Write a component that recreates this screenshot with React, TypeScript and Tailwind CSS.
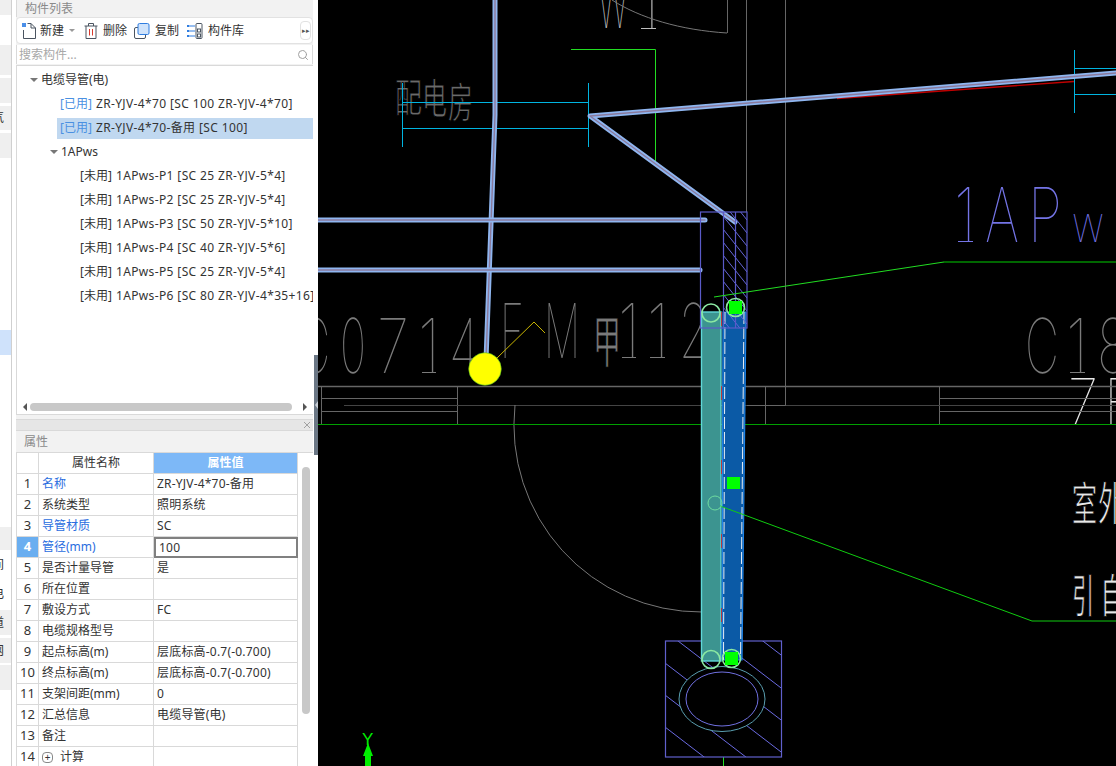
import { Search } from "lucide-react";

const font = { fontFamily: '"Noto Sans", "Noto Sans CJK SC", sans-serif' };

const tree = [
  { label: "ZR-YJV-4*70 [SC 100 ZR-YJV-4*70]", used: true },
  { label: "ZR-YJV-4*70-备用 [SC 100]", used: true, selected: true },
];

const pws = [
  "1APws-P1 [SC 25 ZR-YJV-5*4]",
  "1APws-P2 [SC 25 ZR-YJV-5*4]",
  "1APws-P3 [SC 50 ZR-YJV-5*10]",
  "1APws-P4 [SC 40 ZR-YJV-5*6]",
  "1APws-P5 [SC 25 ZR-YJV-5*4]",
  "1APws-P6 [SC 80 ZR-YJV-4*35+16]",
];

const rows = [
  { name: "名称", value: "ZR-YJV-4*70-备用", blue: true },
  { name: "系统类型", value: "照明系统" },
  { name: "导管材质", value: "SC", blue: true },
  { name: "管径(mm)", value: "100", blue: true, active: true },
  { name: "是否计量导管", value: "是" },
  { name: "所在位置", value: "" },
  { name: "敷设方式", value: "FC" },
  { name: "电缆规格型号", value: "" },
  { name: "起点标高(m)", value: "层底标高-0.7(-0.700)" },
  { name: "终点标高(m)", value: "层底标高-0.7(-0.700)" },
  { name: "支架间距(mm)", value: "0" },
  { name: "汇总信息", value: "电缆导管(电)" },
  { name: "备注", value: "" },
  { name: "计算", value: "", expand: true },
];

const strip = [
  { cls: "h-[15px] bg-[#efefef]" },
  { cls: "h-[30px] bg-white" },
  { cls: "h-[30px] bg-[#efefef]" },
  { cls: "h-[3px] bg-white" },
  { cls: "h-[25px] bg-[#efefef]" },
  { cls: "h-[3px] bg-white" },
  { cls: "h-[24px] bg-[#efefef]", text: "气" },
  { cls: "h-[3px] bg-white" },
  { cls: "h-[25px] bg-[#efefef]" },
  { cls: "h-[172px] bg-white" },
  { cls: "h-[25px] bg-[#cfe2fb]" },
  { cls: "h-[172px] bg-white" },
  { cls: "h-[23px] bg-[#efefef]" },
  { cls: "h-[30px] bg-white", text: "间" },
  { cls: "h-[27px] bg-white", text: "电" },
  { cls: "h-[3px] bg-white" },
  { cls: "h-[25px] bg-[#efefef]", text: "道" },
  { cls: "h-[3px] bg-white" },
  { cls: "h-[25px] bg-[#efefef]", text: "网" },
  { cls: "h-[2px] bg-white" },
  { cls: "h-[25px] bg-[#efefef]" },
];

// CAD annotation glyphs: x, baseline, width, height
const gray = "#7a7a7a";
const white = "#e8e8e8";
const purple = "#7474e6";
const cadText = [
  { t: "W", x: 598, y: 28, w: 30, h: 50, c: "#bdbdbd" },
  { t: "1", x: 640, y: 29, w: 18, h: 50, c: "#bdbdbd" },
  { t: "C", x: 300, y: 373, w: 30, h: 55, c: gray },
  { t: "0", x: 340, y: 373, w: 26, h: 55, c: gray },
  { t: "7", x: 377, y: 373, w: 32, h: 55, c: gray },
  { t: "1", x: 418, y: 373, w: 22, h: 55, c: gray },
  { t: "4", x: 449, y: 373, w: 30, h: 55, c: gray },
  { t: "F", x: 500, y: 358, w: 24, h: 55, c: gray },
  { t: "M", x: 544, y: 358, w: 36, h: 55, c: gray },
  { t: "1", x: 618, y: 358, w: 22, h: 55, c: gray },
  { t: "1", x: 647, y: 358, w: 22, h: 55, c: gray },
  { t: "2", x: 679, y: 358, w: 30, h: 55, c: gray },
  { t: "C", x: 1025, y: 373, w: 34, h: 55, c: gray },
  { t: "1", x: 1066, y: 373, w: 22, h: 55, c: gray },
  { t: "8", x: 1097, y: 373, w: 32, h: 55, c: gray },
  { t: "7", x: 1068, y: 425, w: 30, h: 47, c: white },
  { t: "F", x: 1105, y: 425, w: 28, h: 47, c: white },
  { t: "1", x: 954, y: 242, w: 22, h: 55, c: purple },
  { t: "A", x: 985, y: 242, w: 34, h: 55, c: purple },
  { t: "P", x: 1028, y: 242, w: 34, h: 55, c: purple },
  { t: "w", x: 1072, y: 242, w: 32, h: 37, c: purple },
];

const cjkText = [
  { t: "配", x: 395, y: 112, size: 40, w: 27, c: "#6a6a6a" },
  { t: "电", x: 422, y: 114, size: 42, w: 25, c: "#6a6a6a" },
  { t: "房", x: 448, y: 118, size: 42, w: 25, c: "#6a6a6a" },
  { t: "甲", x: 593, y: 362, size: 56, w: 28, c: gray },
  { t: "室", x: 1072, y: 520, size: 46, w: 25, c: white },
  { t: "外", x: 1098, y: 520, size: 46, w: 26, c: white },
  { t: "引", x: 1072, y: 612, size: 46, w: 22, c: white },
  { t: "自", x: 1100, y: 612, size: 46, w: 26, c: white },
];

function Pipe({ points }: { points: string }) {
  return (
    <g fill="none" strokeLinecap="round" strokeLinejoin="round">
      <polyline points={points} stroke="#8fb6f0" strokeWidth="5" />
      <polyline points={points} stroke="#8a7a9c" strokeWidth="1.4" />
    </g>
  );
}

function Drawing() {
  return (
    <svg viewBox="318 0 798 766" className="block h-[766px] w-[798px]">
      <defs>
        <clipPath id="wall">
          <rect x="723" y="212" width="24" height="116" />
        </clipPath>
        <clipPath id="block">
          <rect x="665" y="641" width="117" height="116" />
        </clipPath>
      </defs>

      {/* annotation text */}
      {cadText.map((g, i) => (
        <text
          key={i}
          x={g.x}
          y={g.y}
          fontFamily="Inter, sans-serif"
          fontWeight={100}
          fontSize={g.h / 0.727}
          textLength={g.w}
          lengthAdjust="spacingAndGlyphs"
          fill={g.c}
        >
          {g.t}
        </text>
      ))}
      {/* only a regular weight exists for CJK, a black stroke over the fill thins it */}
      {cjkText.map((g, i) => (
        <text
          key={i}
          x={g.x}
          y={g.y}
          fontFamily='"Noto Sans CJK SC", sans-serif'
          fontSize={g.size}
          textLength={g.w}
          lengthAdjust="spacingAndGlyphs"
          fill={g.c}
          stroke="#000"
          strokeWidth="1"
        >
          {g.t}
        </text>
      ))}
      {/* foot serifs of the CAD "1" */}
      <g stroke={gray} strokeWidth="1">
        <path d="M422 372.5H436M622 357.5H636M650 357.5H665M1070 372.5H1085" />
        <path d="M641 28.5H656" stroke="#bdbdbd" />
        <path d="M958 241.5H973" stroke={purple} />
      </g>

      {/* walls and floor lines */}
      <g fill="none" stroke="#666" strokeWidth="1">
        <path d="M318 386.5H1116" strokeWidth="1.4" />
        <path d="M321.5 386V424M457.5 386V424M939.5 386V424M765.5 386V424" />
        <path d="M321 398.5H457M321 411.5H457M940 398.5H1116M940 411.5H1116" />
        <path d="M344 405.5H1116" stroke="#444" />
        <path d="M746.5 0V212M785.5 0V405.5H747" />
        <path d="M727.5 0V33" />
        <path d="M612 0C640 18 680 30 727 33" stroke="#777" />
        <path d="M515 405A187 187 0 0 0 702 612" stroke="#777" />
      </g>
      <path d="M318 424.5H1116" stroke="#00a000" />

      {/* dimension lines */}
      <g fill="none" stroke="#00b4e0" strokeWidth="1">
        <path d="M402.5 83V147M588.5 83V147M403 102.5H588M403 128.5H588" />
        <path d="M1074.5 50V113M1075 68.5H1116M1075 94.5H1116" />
      </g>

      {/* leaders */}
      <g fill="none" strokeWidth="1">
        <path d="M571 49.5H655.5V161" stroke="#22dd22" />
        <path d="M497 358L534 322L545 333" stroke="#c8b400" />
        <path d="M723.5 757V766" stroke="#22dd22" />
      </g>
      <path d="M837 98.5L1074 81.5" stroke="#c00000" strokeWidth="1.4" />

      {/* pipes */}
      <Pipe points="495,0 495,115 486,360" />
      <Pipe points="318,220 705,220" />
      <Pipe points="318,270 700,270" />
      <Pipe points="1116,73 590,116 735,222" />
      <circle cx="485" cy="369" r="16.3" fill="#ffff00" stroke="#44bb22" strokeWidth="0.6" />

      {/* foundation block */}
      <g clipPath="url(#block)" stroke="#6a6ae0" strokeWidth="1">
        {[566, 599, 631, 663, 695, 727].map((y) => (
          <line key={y} x1="665" y1={y} x2="785" y2={y + 92} />
        ))}
      </g>
      <ellipse cx="722" cy="699" rx="43" ry="32.5" fill="#000" stroke="#5a9fb0" strokeWidth="1" />
      <ellipse cx="722" cy="699" rx="36" ry="27" fill="none" stroke="#7070e0" strokeWidth="1" />
      <rect x="665.5" y="641" width="116" height="116" fill="none" stroke="#6060cc" strokeWidth="1.2" />

      {/* conduits */}
      <rect x="701.5" y="312" width="19.5" height="349" fill="#3c9490" stroke="#5fd8d8" strokeWidth="1.4" />
      <polygon points="723,312 746,312 742,660 722,660" fill="#0b5aa6" stroke="#1e84ea" strokeWidth="1.2" />
      <path d="M725 312L723.5 660M744 312L740.5 660" stroke="#e8eef4" strokeWidth="1" strokeDasharray="12 3" />
      <path d="M721.5 312V660" stroke="#e02020" strokeWidth="0.8" strokeDasharray="14 60" />

      {/* hatched wall */}
      <g clipPath="url(#wall)" stroke="#6464d8" strokeWidth="1">
        {[190, 203, 216, 229, 242, 255, 268, 281, 294, 307, 320].map((y) => (
          <line key={y} x1="723" y1={y} x2="747" y2={y + 30} />
        ))}
      </g>
      <g fill="none" stroke="#5a5ac8" strokeWidth="1.2">
        <rect x="700.5" y="212" width="46.5" height="116" />
        <path d="M723.5 212V328M735.5 212V328" />
      </g>

      {/* leaders that run over the conduits */}
      <g fill="none" strokeWidth="1">
        <path d="M714 297L944 262" stroke="#22dd22" />
        <path d="M944 262H1116" stroke="#008a00" strokeWidth="1.4" />
        <path d="M720 506L1032 621H1116" stroke="#10cc10" />
      </g>

      {/* grips */}
      <g fill="none" stroke="#8be8a2" strokeWidth="1.6">
        <circle cx="711" cy="313" r="9" />
        <circle cx="735.5" cy="307.5" r="9" />
        <circle cx="711" cy="659.5" r="9" />
        <circle cx="731.5" cy="658.5" r="9" />
      </g>
      <circle cx="715" cy="503" r="7" fill="none" stroke="#6fdca0" strokeWidth="1" />
      <g fill="#00ff00">
        <rect x="729" y="301" width="13" height="13" />
        <rect x="727" y="477" width="13" height="12" />
        <rect x="725" y="652" width="13" height="13" />
      </g>

      {/* axis marker */}
      <path d="M365 756H371V766H365ZM363 756L368 743L373 756Z" fill="#00ee00" />
      <text x="362" y="745" fontFamily="Liberation Sans, sans-serif" fontSize="17" fill="#00ee00">
        Y
      </text>
    </svg>
  );
}

function ToolbarIcons({ kind }: { kind: "new" | "delete" | "copy" | "library" }) {
  if (kind === "new")
    return (
      <svg width="17" height="18" viewBox="0 0 17 18" className="shrink-0">
        <path d="M2.5 8V16.5H14.5V6L10 1.5H6.5" fill="none" stroke="#4a5460" />
        <path d="M10 1.5V6H14.5" fill="none" stroke="#4a5460" />
        <rect x="1" y="1" width="4" height="4" fill="#4a8fe8" />
      </svg>
    );
  if (kind === "delete")
    return (
      <svg width="14" height="16" viewBox="0 0 14 16" className="shrink-0">
        <path d="M0.5 3H13.5M4.5 3V0.5H9.5V3M2 3V15.5H12V3" fill="none" stroke="#4a5460" />
        <path d="M5.5 6V12.5M8.5 6V12.5" stroke="#d83a2e" />
      </svg>
    );
  if (kind === "copy")
    return (
      <svg width="16" height="16" viewBox="0 0 16 16" className="shrink-0">
        <rect x="0.5" y="4.5" width="11" height="11" rx="1.5" fill="#fff" stroke="#4a5460" />
        <rect x="4" y="0.5" width="11" height="11" rx="1.5" fill="#cfe3fb" stroke="#2f7de0" />
      </svg>
    );
  return (
    <svg width="16" height="16" viewBox="0 0 16 16" className="shrink-0">
      <rect x="9" y="0.5" width="6" height="15" rx="1" fill="none" stroke="#4a5460" />
      <rect x="10.5" y="6" width="3" height="3" fill="none" stroke="#4a5460" />
      <rect x="10.5" y="11" width="3" height="3" fill="none" stroke="#4a5460" />
      <path d="M2 3H8M2 8H8M2 13H8" stroke="#2f7de0" />
      <rect x="0" y="2" width="2" height="2" fill="#2f7de0" />
      <rect x="0" y="7" width="2" height="2" fill="#2f7de0" />
      <rect x="0" y="12" width="2" height="2" fill="#2f7de0" />
    </svg>
  );
}

function Caret() {
  return <span className="h-0 w-0 border-x-[4px] border-t-[4px] border-x-transparent border-t-[#777]" />;
}

export default function App() {
  return (
    <div className="flex h-[766px] w-[1116px] overflow-hidden bg-white text-[12px] text-[#333]" style={font}>
      {/* docked tabs, mostly clipped */}
      <div className="flex w-[12px] shrink-0 flex-col border-r border-[#d0d0d0]">
        {strip.map((s, i) => (
          <div key={i} className={`flex shrink-0 items-center justify-end overflow-hidden pr-[7px] ${s.cls}`}>
            {s.text && <span className="shrink-0">{s.text}</span>}
          </div>
        ))}
      </div>
      <div className="w-[4px] shrink-0" />

      {/* left panels */}
      <div className="flex w-[297px] shrink-0 flex-col bg-[#f2f2f2]">
        <div className="flex h-[17px] shrink-0 items-center border-l border-[#d9d9d9] pl-2 text-[#8a8a8a]">构件列表</div>
        <div className="flex h-[27px] shrink-0 items-center rounded-sm border border-[#e2e2e2] bg-white pl-1">
          <ToolbarIcons kind="new" />
          <span className="ml-[2px]">新建</span>
          <span className="ml-[5px] h-0 w-0 border-x-[3px] border-t-[3px] border-x-transparent border-t-[#999]" />
          <span className="ml-[9px] flex items-center gap-[5px]">
            <ToolbarIcons kind="delete" />
            删除
          </span>
          <span className="ml-[7px] flex items-center gap-[5px]">
            <ToolbarIcons kind="copy" />
            复制
          </span>
          <span className="ml-2 flex items-center gap-[5px]">
            <ToolbarIcons kind="library" />
            构件库
          </span>
          <span className="ml-auto mr-[1px] flex h-[19px] w-[11px] items-center justify-center rounded-sm border border-[#e2e2e2] text-[7px] leading-none text-[#555]">
            ▸▸
          </span>
        </div>
        <div className="mt-[1px] flex h-[19px] shrink-0 items-center justify-between border-x border-[#d9d9d9] bg-white pl-[2px] pr-[3px] text-[#a8a8a8]">
          搜索构件...
          <Search size={12} color="#a0a0a0" />
        </div>

        <div className="mt-[1px] flex h-[350px] shrink-0 flex-col border-y border-l border-[#d9d9d9] bg-white">
          <div className="flex-1 overflow-hidden pt-[2px]">
            <div className="flex h-6 items-center pl-[13px]">
              <Caret />
              <span className="ml-[3px]">电缆导管(电)</span>
            </div>
            {tree.map((row) => (
              <div key={row.label} className="flex h-6 items-center pl-10">
                <div
                  className={`flex h-[21px] flex-1 items-center whitespace-nowrap pl-[3px] tracking-[0.37px] ${
                    row.selected ? "bg-[#c0d8f0]" : ""
                  }`}
                >
                  <span className="mr-[4px] tracking-normal text-[#4a90e2]">[已用]</span>
                  {row.label}
                </div>
              </div>
            ))}
            <div className="flex h-6 items-center pl-[33px]">
              <Caret />
              <span className="ml-[3px]">1APws</span>
            </div>
            {pws.map((label) => (
              <div key={label} className="flex h-6 items-center whitespace-nowrap pl-[63px] tracking-[0.37px]">
                <span className="mr-[4px] tracking-normal">[未用]</span>
                {label}
              </div>
            ))}
          </div>
          <div className="flex h-[14px] items-center">
            <span className="ml-[6px] h-0 w-0 border-y-[4px] border-r-[4px] border-y-transparent border-r-[#555]" />
            <span className="ml-[3px] h-[8px] w-[262px] rounded-full bg-[#c8c8c8]" />
            <span className="ml-auto mr-[6px] h-0 w-0 border-y-[4px] border-l-[4px] border-y-transparent border-l-[#555]" />
          </div>
        </div>

        <div className="mt-[4px] flex h-[12px] shrink-0 items-center justify-end border-y border-[#d9d9d9] bg-[#e6e6e6] pr-[2px]">
          <svg width="8" height="8" viewBox="0 0 8 8">
            <path d="M1 1L7 7M7 1L1 7" stroke="#a0a0a0" />
          </svg>
        </div>
        <div className="flex h-[22px] shrink-0 items-center border-b border-[#d9d9d9] pl-2 text-[#8a8a8a]">属性</div>

        <div className="flex min-h-0 flex-1 overflow-hidden bg-white">
          <div className="grid w-[281px] shrink-0 grid-cols-[22px_115px_144px] auto-rows-[21px] border-l border-[#d9d9d9]">
            <div className="border-b border-r border-[#d9d9d9]" />
            <div className="flex items-center justify-center border-b border-r border-[#d9d9d9]">属性名称</div>
            <div className="flex items-center justify-center border-b border-r border-[#d9d9d9] bg-[#7db8f7] font-bold text-white">
              属性值
            </div>
            {rows.map((row, i) => (
              <div key={row.name} className="contents">
                <div
                  className={`flex items-center justify-center border-b border-r border-[#d9d9d9] text-[13px] ${
                    row.active ? "bg-[#6aaef0] font-bold text-white" : ""
                  }`}
                >
                  {i + 1}
                </div>
                <div
                  className={`flex items-center border-b border-r border-[#d9d9d9] pl-[3px] ${
                    row.blue ? "text-[#2a6de0]" : ""
                  }`}
                >
                  {row.expand && (
                    <span className="mr-[7px] flex h-[11px] w-[11px] items-center justify-center rounded-sm border border-[#888] text-[10px] leading-none">
                      +
                    </span>
                  )}
                  {row.name}
                </div>
                <div
                  className={`flex items-center pl-[3px] tracking-[0.2px] ${
                    row.active ? "border-2 border-[#808080]" : "border-b border-r border-[#d9d9d9]"
                  }`}
                >
                  {row.value}
                </div>
              </div>
            ))}
          </div>
          <div className="w-[15px] pl-[5px] pt-[14px]">
            <div className="h-[247px] w-[8px] rounded-full bg-[#c8c8c8]" />
          </div>
        </div>
      </div>

      {/* splitter */}
      <div className="flex w-[5px] shrink-0 flex-col bg-white">
        <div className="h-[355px] shrink-0" />
        <div className="ml-[1px] flex h-[100px] items-center justify-center bg-[#6b7785]">
          <span className="h-0 w-0 border-y-[4px] border-r-[3px] border-y-transparent border-r-[#c8ced6]" />
        </div>
      </div>

      {/* drawing */}
      <div className="flex-1 overflow-hidden bg-black">
        <Drawing />
      </div>
    </div>
  );
}
